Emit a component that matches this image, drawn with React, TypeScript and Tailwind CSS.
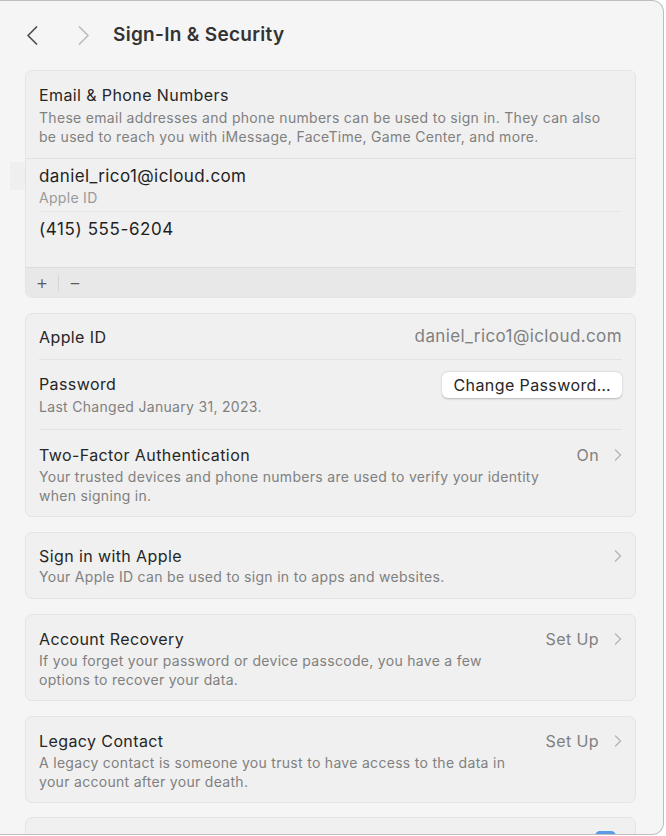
import React from 'react';

const font = { fontFamily: 'Inter, "Noto Sans", sans-serif' };

const Chevron = () => (
  <svg width="8" height="12" viewBox="0 0 8 12" className="ml-[15px]">
    <path d="M1.5 1l5 5-5 5" fill="none" stroke="#b5b5b5" strokeWidth="1.4" strokeLinecap="round" strokeLinejoin="round" />
  </svg>
);

const NavArrow = ({ dir, color }: { dir: 'left' | 'right'; color: string }) => (
  <svg width="12" height="19" viewBox="0 0 12 19">
    <path
      d={dir === 'left' ? 'M10.5 1L2 9.5l8.5 8.5' : 'M1.5 1L10 9.5 1.5 18'}
      fill="none"
      stroke={color}
      strokeWidth="1.7"
      strokeLinecap="round"
      strokeLinejoin="round"
    />
  </svg>
);

interface RowProps {
  title: string;
  desc: React.ReactNode;
  value?: string;
  compact?: boolean;
}

// 带说明文字和箭头的设置行
const InfoRow: React.FC<RowProps> = ({ title, desc, value, compact }) => (
  <div className={`flex items-start justify-between px-[13px] ${compact ? 'pt-[13px] pb-[12px]' : 'pt-[14px] pb-[11px]'}`}>
    <div className="flex-1">
      <div className="text-[16px] leading-[20px] tracking-[0.4px] text-[#262626]">{title}</div>
      <div className={`${compact ? 'mt-[1px]' : 'mt-[2px]'} text-[14px] leading-[19px] tracking-[0.3px] text-[#808080]`}>{desc}</div>
    </div>
    <div className="flex h-[20px] items-center">
      {value && <span className="text-[16px] tracking-[0.4px] text-[#808080]">{value}</span>}
      <Chevron />
    </div>
  </div>
);

const Card: React.FC<{ children: React.ReactNode }> = ({ children }) => (
  <div className="rounded-[7px] border border-[#e4e4e4] bg-[#f0f0f0] overflow-hidden">{children}</div>
);

export default function App() {
  return (
    <div className="w-[666px] h-[836px] bg-white" style={font}>
      <div className="w-[664px] h-[835px] overflow-hidden rounded-tr-[12px] rounded-br-[12px] border-t border-r border-b border-[#bdbdbd] bg-[#f5f5f5]">
        {/* 顶部导航 */}
        <div className="flex h-[69px] items-center pl-[26px]">
          <NavArrow dir="left" color="#4d4d4d" />
          <div className="ml-[40px]">
            <NavArrow dir="right" color="#bdbdbd" />
          </div>
          <h1 className="ml-[23px] text-[19px] font-semibold tracking-[0.3px] text-[#333333]">Sign-In &amp; Security</h1>
        </div>

        <div className="flex w-[636px] flex-col gap-[15px] pl-[25px]">
          {/* 邮箱与电话 */}
          <div className="relative">
            <div className="absolute left-[-15px] top-[92px] h-[28px] w-[15px] bg-[#efefef]" />
            <Card>
              <div className="px-[13px] pt-[14px] pb-[12px]">
                <div className="text-[16px] leading-[20px] tracking-[0.4px] text-[#262626]">Email &amp; Phone Numbers</div>
                <div className="mt-[3px] text-[14px] leading-[19px] tracking-[0.3px] text-[#808080]">
                  These email addresses and phone numbers can be used to sign in. They can also
                  <br />
                  be used to reach you with iMessage, FaceTime, Game Center, and more.
                </div>
              </div>
              <div className="h-[109px] border-t border-[#e2e2e2] px-[13px]">
                <div className="border-b border-[#e6e6e6] pt-[6px] pb-[4px]">
                  <div className="text-[17px] leading-[22px] tracking-[0.4px] text-[#1f1f1f]">daniel_rico1@icloud.com</div>
                  <div className="mt-[1px] text-[14px] leading-[19px] tracking-[0.3px] text-[#9a9a9a]">Apple ID</div>
                </div>
                <div className="pt-[6px] text-[17px] leading-[22px] tracking-[0.6px] text-[#1f1f1f]">(415) 555-6204</div>
              </div>
              <div className="flex h-[30px] items-center border-t border-[#dcdcdc] bg-[#e8e8e8] text-[#5a5a5a]">
                <span className="w-[32px] text-center text-[19px] font-light leading-none">+</span>
                <span className="h-[16px] w-px bg-[#d4d4d4]" />
                <span className="w-[32px] text-center text-[19px] font-light leading-none">−</span>
              </div>
            </Card>
          </div>

          {/* 账户信息 */}
          <Card>
            <div className="mx-[13px] flex h-[46px] items-center justify-between border-b border-[#e3e3e3]">
              <span className="text-[16px] tracking-[0.4px] text-[#262626]">Apple ID</span>
              <span className="text-[17px] tracking-[0.4px] text-[#808080]">daniel_rico1@icloud.com</span>
            </div>
            <div className="mx-[13px] flex h-[70px] items-start justify-between border-b border-[#e3e3e3] pt-[14px]">
              <div>
                <div className="text-[16px] leading-[20px] tracking-[0.4px] text-[#262626]">Password</div>
                <div className="mt-[3px] text-[14px] leading-[19px] tracking-[0.3px] text-[#808080]">Last Changed January 31, 2023.</div>
              </div>
              <button className="-mt-[2px] h-[26px] rounded-[6px] bg-white px-[11px] text-[16px] tracking-[0.4px] text-[#262626] shadow-[0_0.5px_2px_rgba(0,0,0,0.25)]">
                Change Password…
              </button>
            </div>
            <div className="flex items-start justify-between px-[13px] pt-[15px] pb-[11px]">
              <div className="flex-1">
                <div className="text-[16px] leading-[20px] tracking-[0.4px] text-[#262626]">Two-Factor Authentication</div>
                <div className="mt-[2px] text-[14px] leading-[19px] tracking-[0.3px] text-[#808080]">
                  Your trusted devices and phone numbers are used to verify your identity
                  <br />
                  when signing in.
                </div>
              </div>
              <div className="flex h-[20px] items-center">
                <span className="text-[16px] tracking-[0.4px] text-[#808080]">On</span>
                <Chevron />
              </div>
            </div>
          </Card>

          <Card>
            <InfoRow compact title="Sign in with Apple" desc="Your Apple ID can be used to sign in to apps and websites." />
          </Card>

          <Card>
            <InfoRow
              title="Account Recovery"
              desc={<>If you forget your password or device passcode, you have a few<br />options to recover your data.</>}
              value="Set Up"
            />
          </Card>

          <Card>
            <InfoRow
              title="Legacy Contact"
              desc={<>A legacy contact is someone you trust to have access to the data in<br />your account after your death.</>}
              value="Set Up"
            />
          </Card>

          <div className="-mt-[1px]">
            <Card>
              <div className="flex h-[40px] justify-end pr-[19px] pt-[13px]">
                <div className="h-[10px] w-[21px] rounded-t-[5px] bg-[#5a9be8]" />
              </div>
            </Card>
          </div>
        </div>
      </div>
    </div>
  );
}
